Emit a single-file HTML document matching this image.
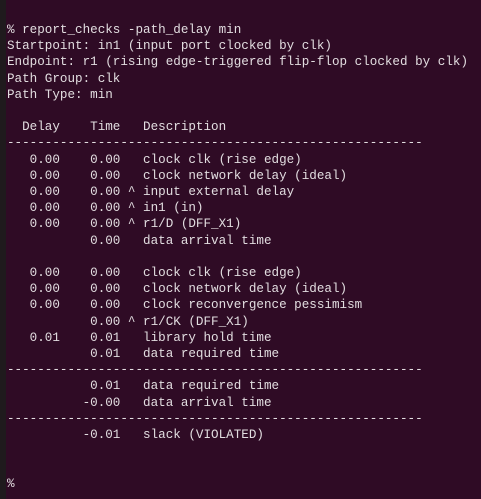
<!DOCTYPE html>
<html><head><style>
html,body{margin:0;padding:0;}
body{width:481px;height:499px;background:#2f0b25;position:relative;overflow:hidden;}
.strip{position:absolute;left:0;top:0;width:6px;height:499px;background:#1f1a1d;}
pre{position:absolute;left:7px;top:22px;margin:0;font-family:"Liberation Mono",monospace;font-size:12.6px;line-height:16.2px;color:#e2dde0;}
</style></head><body>
<div class="strip"></div>
<pre>% report_checks -path_delay min
Startpoint: in1 (input port clocked by clk)
Endpoint: r1 (rising edge-triggered flip-flop clocked by clk)
Path Group: clk
Path Type: min

  Delay    Time   Description
-------------------------------------------------------
   0.00    0.00   clock clk (rise edge)
   0.00    0.00   clock network delay (ideal)
   0.00    0.00 ^ input external delay
   0.00    0.00 ^ in1 (in)
   0.00    0.00 ^ r1/D (DFF_X1)
           0.00   data arrival time

   0.00    0.00   clock clk (rise edge)
   0.00    0.00   clock network delay (ideal)
   0.00    0.00   clock reconvergence pessimism
           0.00 ^ r1/CK (DFF_X1)
   0.01    0.01   library hold time
           0.01   data required time
-------------------------------------------------------
           0.01   data required time
          -0.00   data arrival time
-------------------------------------------------------
          -0.01   slack (VIOLATED)


%</pre>
</body></html>
